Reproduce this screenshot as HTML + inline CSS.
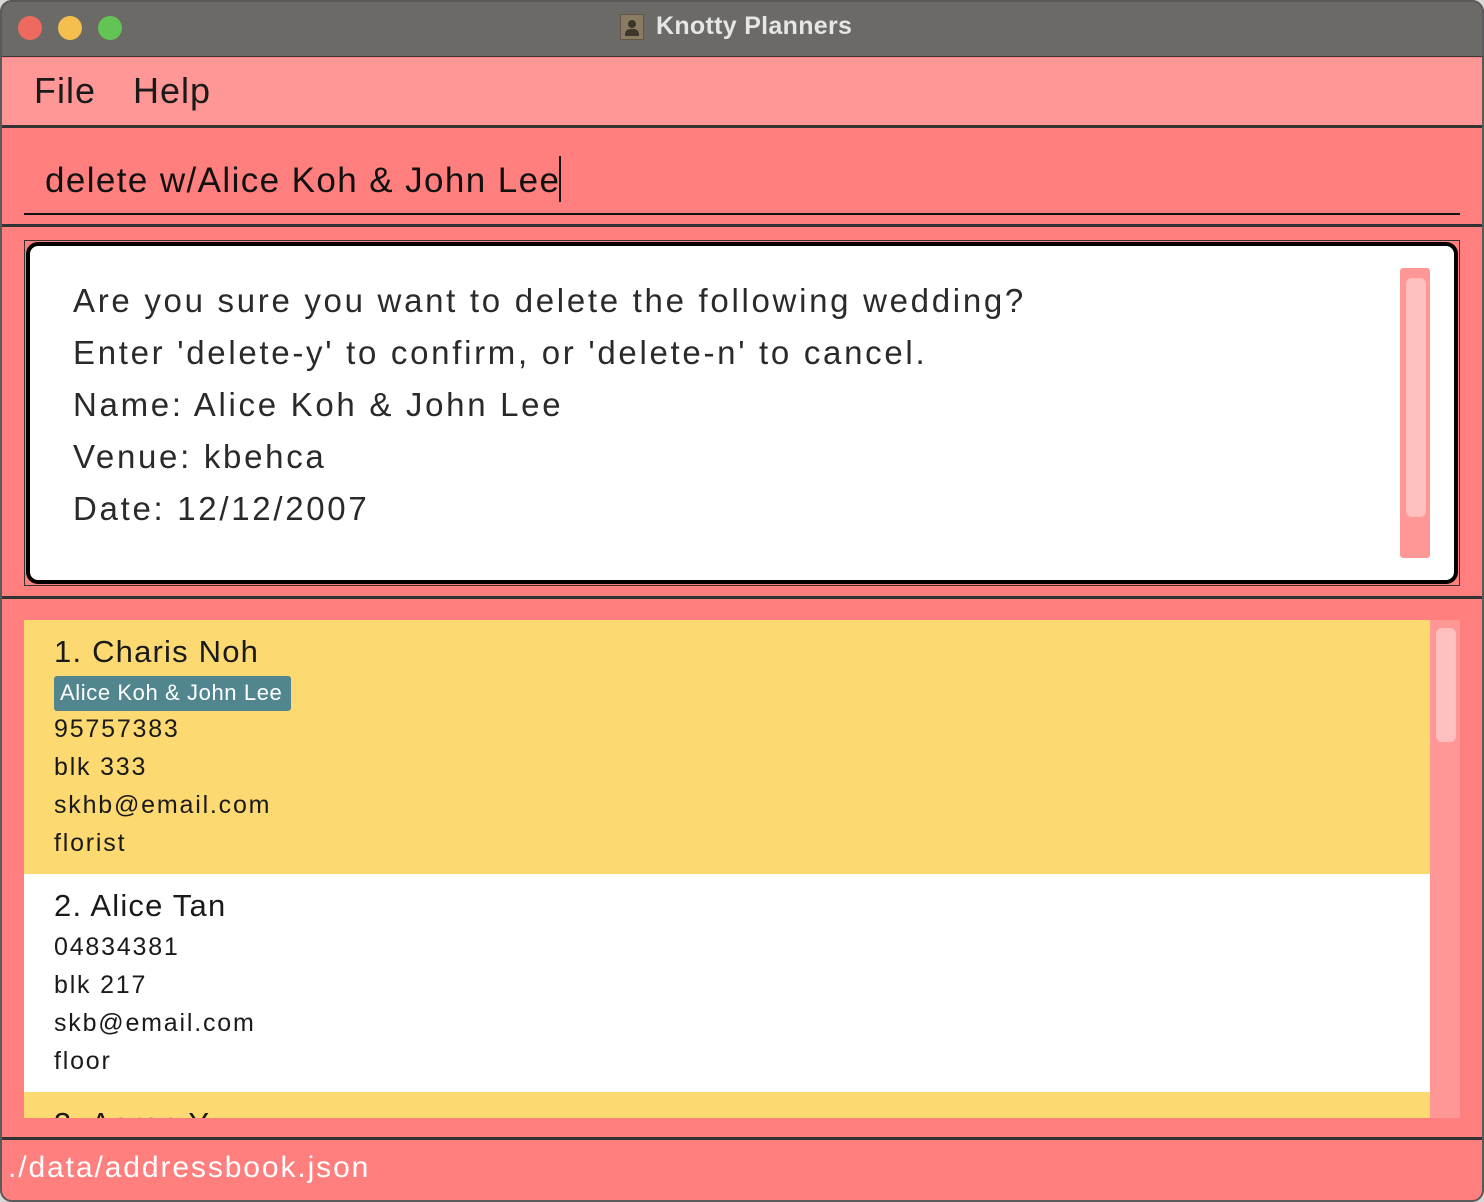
<!DOCTYPE html>
<html><head><meta charset="utf-8"><style>
*{margin:0;padding:0;box-sizing:border-box}
html,body{width:1484px;height:1202px;overflow:hidden;background:#d8d8d8}
body{font-family:"Liberation Sans",sans-serif;position:relative}
.abs{position:absolute}
.win{left:0;top:0;width:1484px;height:1202px;border-radius:12px;overflow:hidden;background:#ff7f7f}
.frame{left:0;top:0;width:1484px;height:1202px;border-radius:12px;border:2px solid #5a5a5a;pointer-events:none}
.title{left:0;top:0;width:1484px;height:57px;background:#6b6a67;border-bottom:1px solid #3a3a3a}
.dot{width:24px;height:24px;border-radius:50%;top:16px}
.menu{left:0;top:58px;width:1484px;height:70px;background:#ff9797;border-bottom:3px solid #333}
.menu span{position:absolute;top:12px;font-size:36px;color:#1a1a1a;letter-spacing:1px}
.cmd{left:0;top:130px;width:1484px;height:97px;background:#ff7f7f;border-bottom:3px solid #333}
.res{left:24px;top:240px;width:1436px;height:346px;border:1px solid #333;background:#ff7f7f}
.resin{left:26px;top:242px;width:1432px;height:342px;background:#fff;border:4px solid #000;border-radius:12px}
.rt{position:absolute;font-size:33px;color:#2a2a2a;letter-spacing:2.7px;white-space:nowrap}
.card{left:24px;width:1406px;color:#1a1a1a;white-space:nowrap}
.nm{position:absolute;left:30px;font-size:31px;letter-spacing:1.2px}
.ln{position:absolute;left:30px;font-size:25px;letter-spacing:1.8px}
</style></head><body>
<div class="abs win">
 <div class="abs title">
  <div class="abs dot" style="left:18px;background:#ee6a5f"></div>
  <div class="abs dot" style="left:58px;background:#f5bf4f"></div>
  <div class="abs dot" style="left:98px;background:#61c454"></div>
  <div class="abs" style="left:620px;top:14px;width:24px;height:26px;background:#8a7c62;border:1px solid #5f5646"><div style="width:8px;height:8px;border-radius:50%;background:#3d362a;margin:5px auto 0"></div><div style="width:14px;height:7px;background:#3d362a;margin:1px auto 0;border-radius:5px 5px 0 0"></div></div>
  <div class="abs" style="left:656px;top:12px;font-size:25px;font-weight:bold;color:#e6e6e6;letter-spacing:0.3px">Knotty Planners</div>
 </div>
 <div class="abs menu"><span style="left:34px">File</span><span style="left:133px">Help</span></div>
 <div class="abs cmd">
  <div class="abs" style="left:45px;top:26px;font-size:35px;color:#111;letter-spacing:1.4px;white-space:nowrap">delete w/Alice Koh &amp; John Lee<span style="display:inline-block;width:2px;height:46px;background:#111;vertical-align:-10px;margin-left:-1px"></span></div>
  <div class="abs" style="left:24px;top:83px;width:1436px;height:2px;background:#111"></div>
 </div>
 <div class="abs res"></div>
 <div class="abs resin">
  <div class="rt" style="top:36px;left:43px">Are you sure you want to delete the following wedding?</div>
  <div class="rt" style="top:88px;left:43px">Enter 'delete-y' to confirm, or 'delete-n' to cancel.</div>
  <div class="rt" style="top:140px;left:43px">Name: Alice Koh &amp; John Lee</div>
  <div class="rt" style="top:192px;left:43px">Venue: kbehca</div>
  <div class="rt" style="top:244px;left:43px">Date: 12/12/2007</div>
  <div class="abs" style="left:1370px;top:22px;width:30px;height:290px;background:#ff9797;border-radius:3px"></div>
  <div class="abs" style="left:1376px;top:32px;width:20px;height:239px;background:#ffbfbf;border-radius:6px"></div>
 </div>
 <div class="abs" style="left:0;top:596px;width:1484px;height:3px;background:#333"></div>
 <div class="abs" style="left:1430px;top:620px;width:30px;height:498px;background:#ff9797"></div>
 <div class="abs" style="left:1436px;top:628px;width:20px;height:114px;background:#ffbfbf;border-radius:6px"></div>
 <div class="abs card" style="top:620px;height:254px;background:#fdd972">
  <div class="nm" style="top:14px">1. Charis Noh</div>
  <div class="abs" style="left:30px;top:56px;width:237px;height:35px;background:#52868f;border-radius:3px;color:#fff;font-size:22px;padding:4px 0 0 6px;letter-spacing:0.6px">Alice Koh &amp; John Lee</div>
  <div class="ln" style="top:95px">95757383</div>
  <div class="ln" style="top:133px">blk 333</div>
  <div class="ln" style="top:171px">skhb@email.com</div>
  <div class="ln" style="top:209px">florist</div>
 </div>
 <div class="abs card" style="top:874px;height:218px;background:#fff">
  <div class="nm" style="top:14px">2. Alice Tan</div>
  <div class="ln" style="top:59px">04834381</div>
  <div class="ln" style="top:97px">blk 217</div>
  <div class="ln" style="top:135px">skb@email.com</div>
  <div class="ln" style="top:173px">floor</div>
 </div>
 <div class="abs card" style="top:1092px;height:26px;background:#fdd972;overflow:hidden">
  <div class="nm" style="top:14px">3. Aaron Y</div>
 </div>
 <div class="abs" style="left:0;top:1137px;width:1484px;height:3px;background:#333"></div>
 <div class="abs" style="left:8px;top:1151px;font-size:30px;color:#fff;letter-spacing:1.9px">./data/addressbook.json</div>
</div>
<div class="abs frame"></div>
</body></html>
